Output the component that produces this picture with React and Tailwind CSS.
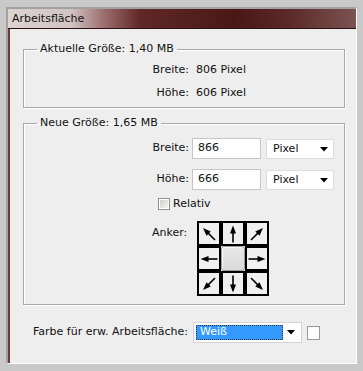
import React from "react";

function Arrow({ angle }) {
  return (
    <svg width="20" height="20" viewBox="0 0 20 20">
      <g transform={`rotate(${angle} 10 10)`}>
        <line x1="10" y1="18.5" x2="10" y2="7" stroke="#000" strokeWidth="1.6" />
        <polygon points="10,1.5 7,9.5 13,9.5" fill="#000" />
      </g>
    </svg>
  );
}

function Cell({ angle }) {
  return (
    <div className="w-[24px] h-[25px] border-2 border-black bg-[#f0f0f0] flex items-center justify-center">
      <Arrow angle={angle} />
    </div>
  );
}

function DropArrow() {
  return (
    <svg width="8" height="5" viewBox="0 0 8 5">
      <polygon points="0,0 8,0 4,4.5" fill="#000" />
    </svg>
  );
}

export default function App() {
  return (
    <div className="w-[363px] h-[371px] bg-[#c9c9c9] px-[6px] pt-[7px] pb-[7px] font-['DejaVu_Sans',sans-serif] text-[11px] text-[#111]">
      <div className="h-full flex flex-col border-l-2 border-t-2 border-[#a2a2a2] border-r border-b border-r-white border-b-white">
        <div className="h-[20px] shrink-0 flex items-center pl-[4px] border-b border-[#2a1010] bg-[linear-gradient(90deg,#dcd3d3_0%,#d2c4c4_18%,#9a6a6a_28%,#602828_38%,#4a1717_65%,#5a2828_80%,#7c5252_100%)]">
          <span className="leading-[14px] text-[#111]">Arbeitsfläche</span>
        </div>
        <div className="flex-1 bg-[#eeeeee] border-l-2 border-[#6e3a3a] flex flex-col">
          <fieldset className="ml-[13px] mr-[11px] mt-[13px] border border-[#a8a8a8] shadow-[inset_1px_1px_0_#ffffff,1px_1px_0_#ffffff] pt-[3px] pb-[2px]">
            <legend className="ml-[13px] px-[3px] leading-[14px]">Aktuelle Größe: 1,40 MB</legend>
            <div className="flex h-[23px] items-center">
              <span className="w-[165px] text-right">Breite:</span>
              <span className="ml-[7px]">806 Pixel</span>
            </div>
            <div className="flex h-[23px] items-center">
              <span className="w-[165px] text-right">Höhe:</span>
              <span className="ml-[7px]">606 Pixel</span>
            </div>
          </fieldset>

          <fieldset className="ml-[13px] mr-[11px] mt-[8px] border border-[#a8a8a8] shadow-[inset_1px_1px_0_#ffffff,1px_1px_0_#ffffff] pt-[7px] pb-[8px]">
            <legend className="ml-[13px] px-[3px] leading-[14px]">Neue Größe: 1,65 MB</legend>
            <div className="flex items-center">
              <span className="w-[165px] text-right">Breite:</span>
              <div className="ml-[3px] w-[69px] h-[21px] border border-[#c6c6c6] bg-white pl-[5px] flex items-center">866</div>
              <div className="ml-[5px] w-[68px] h-[20px] mt-[2px] border border-[#dedede] bg-white pl-[6px] pr-[5px] flex items-center justify-between">
                <span>Pixel</span>
                <DropArrow />
              </div>
            </div>
            <div className="flex items-center mt-[9px]">
              <span className="w-[165px] text-right">Höhe:</span>
              <div className="ml-[3px] w-[69px] h-[21px] border border-[#c6c6c6] bg-white pl-[5px] flex items-center">666</div>
              <div className="ml-[5px] w-[68px] h-[20px] mt-[2px] border border-[#dedede] bg-white pl-[6px] pr-[5px] flex items-center justify-between">
                <span>Pixel</span>
                <DropArrow />
              </div>
            </div>
            <div className="flex items-center mt-[8px] ml-[134px] h-[12px]">
              <div className="w-[12px] h-[12px] border border-[#8e8f8f] bg-white p-[1px]">
                <div className="w-full h-full bg-[linear-gradient(135deg,#cfcfcf,#f4f4f4)]"></div>
              </div>
              <span className="ml-[3px] leading-[14px]">Relativ</span>
            </div>
            <div className="flex mt-[11px] ml-[128px]">
              <span className="w-[45px] mt-[5px] leading-[14px]">Anker:</span>
              <div className="grid grid-cols-[24px_24px_24px]">
                <Cell angle={-45} />
                <Cell angle={0} />
                <Cell angle={45} />
                <Cell angle={-90} />
                <div className="w-[24px] h-[25px] rounded-[3px] border border-[#9c9c9c] bg-[linear-gradient(180deg,#e9e9e9,#d9d9d9)] shadow-[inset_1px_1px_0_#f8f8f8]"></div>
                <Cell angle={90} />
                <Cell angle={-135} />
                <Cell angle={180} />
                <Cell angle={135} />
              </div>
            </div>
          </fieldset>

          <div className="flex items-center mt-[17px] ml-[23px]">
            <span className="w-[160px]">Farbe für erw. Arbeitsfläche:</span>
            <div className="w-[109px] h-[21px] border border-[#d4d4d4] bg-white p-[2px] flex items-center">
              <div className="w-[87px] h-full bg-[#3399ff] outline-1 outline-dotted outline-[#333] -outline-offset-1 pl-[4px] flex items-center text-white">Weiß</div>
              <div className="flex-1 flex justify-center items-center">
                <DropArrow />
              </div>
            </div>
            <div className="ml-[5px] w-[13px] h-[14px] border border-[#9a9a9a] bg-white"></div>
          </div>
        </div>
      </div>
    </div>
  );
}
